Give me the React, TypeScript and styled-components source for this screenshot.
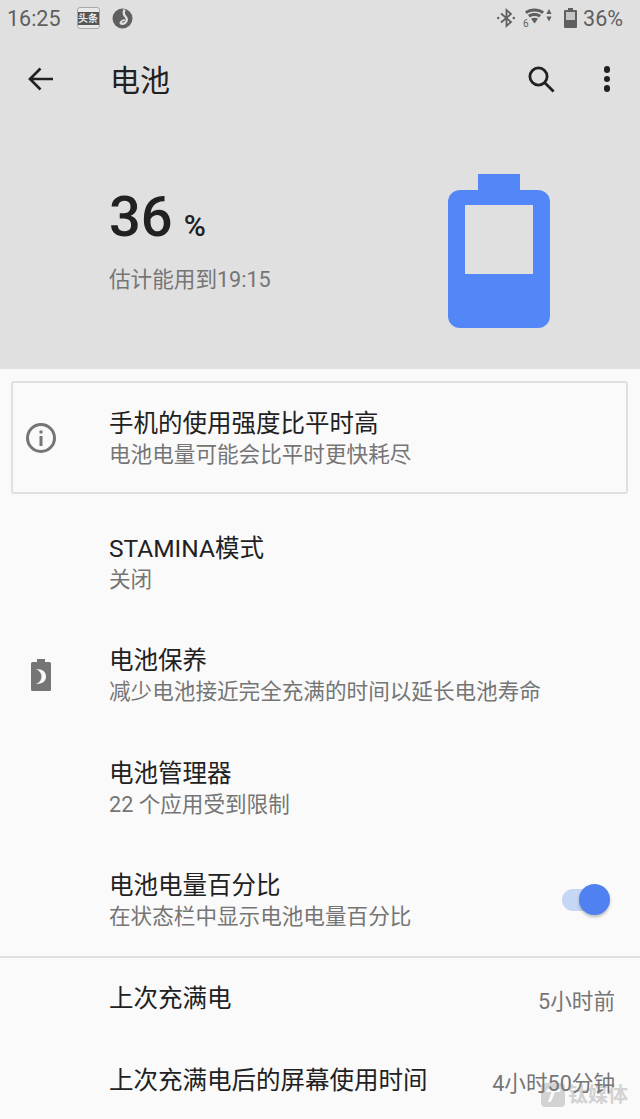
import styled, { createGlobalStyle } from "styled-components";

const GlobalStyle = createGlobalStyle`
    html, body {
        margin: 0;
        padding: 0;
        background: #fafafa;
    }
    * {
        box-sizing: border-box;
    }
`;

const font = `Roboto, "Noto Sans CJK SC", sans-serif`;

function App() {
    return (
        <Page>
            <GlobalStyle />
            <Header>
                <StatusBar>
                    <StatusGroup>
                        <Clock>16:25</Clock>
                        <NewsBadge>
                            <span>头条</span>
                        </NewsBadge>
                        <svg width="21" height="21" viewBox="0 0 21 21">
                            <circle cx="10.5" cy="10.5" r="10" fill="#5f5f5f" />
                            <path d="M12.5 1.5 C11.5 4 11 6 13 8 C15 10 15.5 12.5 13.5 14.5 C12 16 10 16 8 15" fill="none" stroke="#e0e0e0" strokeWidth="2.4" />
                            <path d="M8 15 C9.5 12.5 11 12 13 12" fill="none" stroke="#e0e0e0" strokeWidth="1.6" />
                        </svg>
                    </StatusGroup>
                    <StatusGroup>
                        <svg width="18" height="20" viewBox="0 0 18 20" fill="none" stroke="#5f5f5f" strokeWidth="1.8">
                            <path d="M4 5.5 L14 14 L9.5 18 V2 L14 6 L4 14.5" />
                            <circle cx="1.2" cy="10" r="1.2" fill="#5f5f5f" stroke="none" />
                            <circle cx="16.8" cy="10" r="1.2" fill="#5f5f5f" stroke="none" />
                        </svg>
                        <WifiWrap>
                            <svg width="28" height="20" viewBox="0 0 28 20">
                                <path d="M1 3.5 C6 -0.5 15 -0.5 20 3.5 L18.2 6 C13.8 2.8 7.2 2.8 2.8 6 Z" fill="#5f5f5f" />
                                <path d="M4 7 C8 4.4 13 4.4 17 7 L15.2 9.4 C12.4 7.6 8.6 7.6 5.8 9.4 Z" fill="#5f5f5f" />
                                <path d="M7 10.8 C9.2 9.4 11.8 9.4 14 10.8 L10.5 15.5 Z" fill="#5f5f5f" />
                                <path d="M25 1 L27.6 6 H22.4 Z M22.4 8.4 H27.6 L25 13.4 Z" fill="#5f5f5f" />
                            </svg>
                            <WifiSix>6</WifiSix>
                        </WifiWrap>
                        <BatteryIcon>
                            <svg width="13" height="20" viewBox="0 0 13 20">
                                <path d="M4 0 H9 V2 H12 A1 1 0 0 1 13 3 V19 A1 1 0 0 1 12 20 H1 A1 1 0 0 1 0 19 V3 A1 1 0 0 1 1 2 H4 Z" fill="#5f5f5f" />
                                <rect x="2" y="4" width="9" height="8" fill="#c4c4c4" />
                            </svg>
                        </BatteryIcon>
                        <Percent>36%</Percent>
                    </StatusGroup>
                </StatusBar>
                <Toolbar>
                    <ToolIcon>
                        <svg width="28" height="28" viewBox="0 0 28 28" fill="none" stroke="#212121" strokeWidth="2.7">
                            <path d="M26 14 H3 M13.5 3.5 L3 14 L13.5 24.5" />
                        </svg>
                    </ToolIcon>
                    <PageTitle>电池</PageTitle>
                    <ToolActions>
                        <svg width="27" height="27" viewBox="0 0 27 27" fill="none" stroke="#212121" strokeWidth="2.8">
                            <circle cx="10.5" cy="10.5" r="8.6" />
                            <path d="M16.5 16.5 L25.6 25.6" />
                        </svg>
                        <MoreDots>
                            <i />
                            <i />
                            <i />
                        </MoreDots>
                    </ToolActions>
                </Toolbar>
                <Hero>
                    <div>
                        <Level>
                            36<small>%</small>
                        </Level>
                        <Estimate>估计能用到19:15</Estimate>
                    </div>
                    <BatteryCap />
                </Hero>
            </Header>

            <Notice>
                <IconSlot>
                    <svg width="30" height="30" viewBox="0 0 30 30">
                        <circle cx="15" cy="15" r="13.5" fill="none" stroke="#757575" strokeWidth="3" />
                        <rect x="13.5" y="13" width="3" height="10" fill="#757575" />
                        <rect x="13.5" y="7.5" width="3" height="3" fill="#757575" />
                    </svg>
                </IconSlot>
                <div>
                    <RowTitle>手机的使用强度比平时高</RowTitle>
                    <RowSub>电池电量可能会比平时更快耗尽</RowSub>
                </div>
            </Notice>

            <List>
                <Row>
                    <IconSlot />
                    <RowText>
                        <RowTitle>STAMINA模式</RowTitle>
                        <RowSub>关闭</RowSub>
                    </RowText>
                </Row>
                <Row>
                    <IconSlot>
                        <svg width="20" height="32" viewBox="0 0 20 32">
                            <path d="M6 0 H14 V3 H18.5 A1.5 1.5 0 0 1 20 4.5 V30.5 A1.5 1.5 0 0 1 18.5 32 H1.5 A1.5 1.5 0 0 1 0 30.5 V4.5 A1.5 1.5 0 0 1 1.5 3 H6 Z" fill="#757575" />
                            <path d="M5 10 C12 10 15 13 15 17.5 C15 22 12 25 5 25 C9 23 10.5 20.5 10.5 17.5 C10.5 14.5 9 12 5 10 Z" fill="#fafafa" />
                        </svg>
                    </IconSlot>
                    <RowText>
                        <RowTitle>电池保养</RowTitle>
                        <RowSub>减少电池接近完全充满的时间以延长电池寿命</RowSub>
                    </RowText>
                </Row>
                <Row>
                    <IconSlot />
                    <RowText>
                        <RowTitle>电池管理器</RowTitle>
                        <RowSub>22 个应用受到限制</RowSub>
                    </RowText>
                </Row>
                <Row>
                    <IconSlot />
                    <RowText>
                        <RowTitle>电池电量百分比</RowTitle>
                        <RowSub>在状态栏中显示电池电量百分比</RowSub>
                    </RowText>
                    <Switch>
                        <SwitchThumb />
                    </Switch>
                </Row>
            </List>

            <Divider />

            <StatRow>
                <IconSlot />
                <RowTitle>上次充满电</RowTitle>
                <StatValue>5小时前</StatValue>
            </StatRow>
            <StatRow>
                <IconSlot />
                <RowTitle>上次充满电后的屏幕使用时间</RowTitle>
                <StatValue>4小时50分钟</StatValue>
            </StatRow>

            <Watermark>
                <svg width="24" height="24" viewBox="0 0 24 24">
                    <rect width="24" height="24" rx="4" fill="#d2d2d2" />
                    <path d="M6 6 H20 L18.5 9 H14 L10 19 H7 L10.5 9 H5 Z" fill="#fafafa" />
                </svg>
                <span>钛媒体</span>
            </Watermark>
        </Page>
    );
}

export default App;

const Page = styled.div`
    position: relative;
    width: 640px;
    height: 1119px;
    overflow: hidden;
    background: #fafafa;
    font-family: ${font};
`;

const Header = styled.header`
    height: 369px;
    background: #e0e0e0;
`;

const StatusBar = styled.div`
    height: 36px;
    padding: 0 17px 0 7px;
    display: flex;
    justify-content: space-between;
    align-items: center;
`;

const StatusGroup = styled.div`
    display: flex;
    align-items: center;
    gap: 9px;
`;

const Clock = styled.span`
    font-size: 21.5px;
    color: #5f5f5f;
    margin-right: 7px;
`;

const NewsBadge = styled.div`
    width: 23px;
    height: 22px;
    margin-right: 3px;
    border: 1px solid #a8a8a8;
    border-radius: 3px;
    display: flex;
    align-items: center;
    background: #e8e8e8;

    span {
        width: 100%;
        height: 13px;
        background: #555;
        color: #e8e8e8;
        font-size: 10px;
        line-height: 13px;
        font-weight: 700;
        text-align: center;
        white-space: nowrap;
    }
`;

const WifiWrap = styled.div`
    position: relative;
    display: flex;
    margin-right: 3px;
`;

const WifiSix = styled.span`
    position: absolute;
    left: -1px;
    bottom: -1px;
    font-size: 10px;
    line-height: 11px;
    color: #5f5f5f;
`;

const BatteryIcon = styled.div`
    display: flex;
    margin-right: -3px;
`;

const Percent = styled.span`
    font-size: 21.5px;
    color: #5f5f5f;
`;

const Toolbar = styled.div`
    height: 86px;
    padding: 0 30px 0 27px;
    display: flex;
    align-items: center;
`;

const ToolIcon = styled.div`
    width: 83px;
    display: flex;
`;

const PageTitle = styled.h1`
    margin: -2px 0 0;
    flex: 1;
    font-size: 30px;
    font-weight: 400;
    color: #212121;
`;

const ToolActions = styled.div`
    display: flex;
    align-items: center;
    gap: 49px;
`;

const MoreDots = styled.div`
    display: flex;
    flex-direction: column;
    gap: 3px;

    i {
        width: 6.5px;
        height: 6.5px;
        border-radius: 50%;
        background: #212121;
    }
`;

const Hero = styled.div`
    padding: 62px 90px 0 109px;
    display: flex;
    justify-content: space-between;
    align-items: flex-start;
`;

const Level = styled.div`
    font-size: 56px;
    line-height: 66px;
    font-weight: 500;
    color: #212121;

    small {
        font-size: 30px;
        font-weight: 500;
        margin-left: 11px;
    }
`;

const Estimate = styled.div`
    margin-top: 6px;
    font-size: 21.6px;
    line-height: 30px;
    color: #757575;
`;

const BatteryCap = styled.div`
    position: relative;
    width: 102px;
    height: 138px;
    margin-top: 6px;
    border-radius: 12px;
    background: #5387f7;

    &::before {
        content: "";
        position: absolute;
        left: 30px;
        top: -16px;
        width: 42px;
        height: 17px;
        background: #5387f7;
    }

    &::after {
        content: "";
        position: absolute;
        left: 17px;
        top: 15px;
        width: 68px;
        height: 69px;
        background: #e0e0e0;
    }
`;

const IconSlot = styled.div`
    flex: none;
    display: flex;
    align-items: center;
`;

const Notice = styled.div`
    margin: 12px 12px 0 11px;
    height: 113px;
    border: 2px solid #e0e0e0;
    border-radius: 3px;
    display: flex;
    align-items: center;

    ${IconSlot} {
        width: 96px;
        padding-left: 13px;
    }
`;

const RowTitle = styled.div`
    font-size: 24.5px;
    line-height: 34px;
    color: #212121;
    white-space: nowrap;
`;

const RowSub = styled.div`
    font-size: 21.6px;
    line-height: 28px;
    color: #757575;
    white-space: nowrap;
`;

const List = styled.div`
    margin-top: 12px;
`;

const Row = styled.div`
    height: 112.5px;
    padding-right: 34px;
    display: flex;
    align-items: center;

    ${IconSlot} {
        width: 109px;
        padding-left: 31px;
    }
`;

const RowText = styled.div`
    flex: 1;
    padding-top: 1px;
`;

const Switch = styled.div`
    position: relative;
    width: 44px;
    height: 22px;
    border-radius: 11px;
    background: #c6d6f5;
`;

const SwitchThumb = styled.div`
    position: absolute;
    right: -4px;
    top: -5px;
    width: 31px;
    height: 31px;
    border-radius: 50%;
    background: #4f82f0;
    box-shadow: 0 2px 3px rgba(0, 0, 0, 0.25);
`;

const Divider = styled.div`
    height: 2px;
    background: #e0e0e0;
`;

const StatRow = styled.div`
    height: 82px;
    padding-right: 25px;
    display: flex;
    align-items: center;

    ${IconSlot} {
        width: 109px;
    }
`;

const StatValue = styled.div`
    position: relative;
    z-index: 1;
    margin-left: auto;
    font-size: 21.6px;
    color: #757575;
    white-space: nowrap;
`;

const Watermark = styled.div`
    position: absolute;
    right: 12px;
    bottom: 12px;
    display: flex;
    align-items: center;
    gap: 3px;

    span {
        font-size: 20px;
        line-height: 24px;
        font-weight: 700;
        color: #d2d2d2;
    }
`;
